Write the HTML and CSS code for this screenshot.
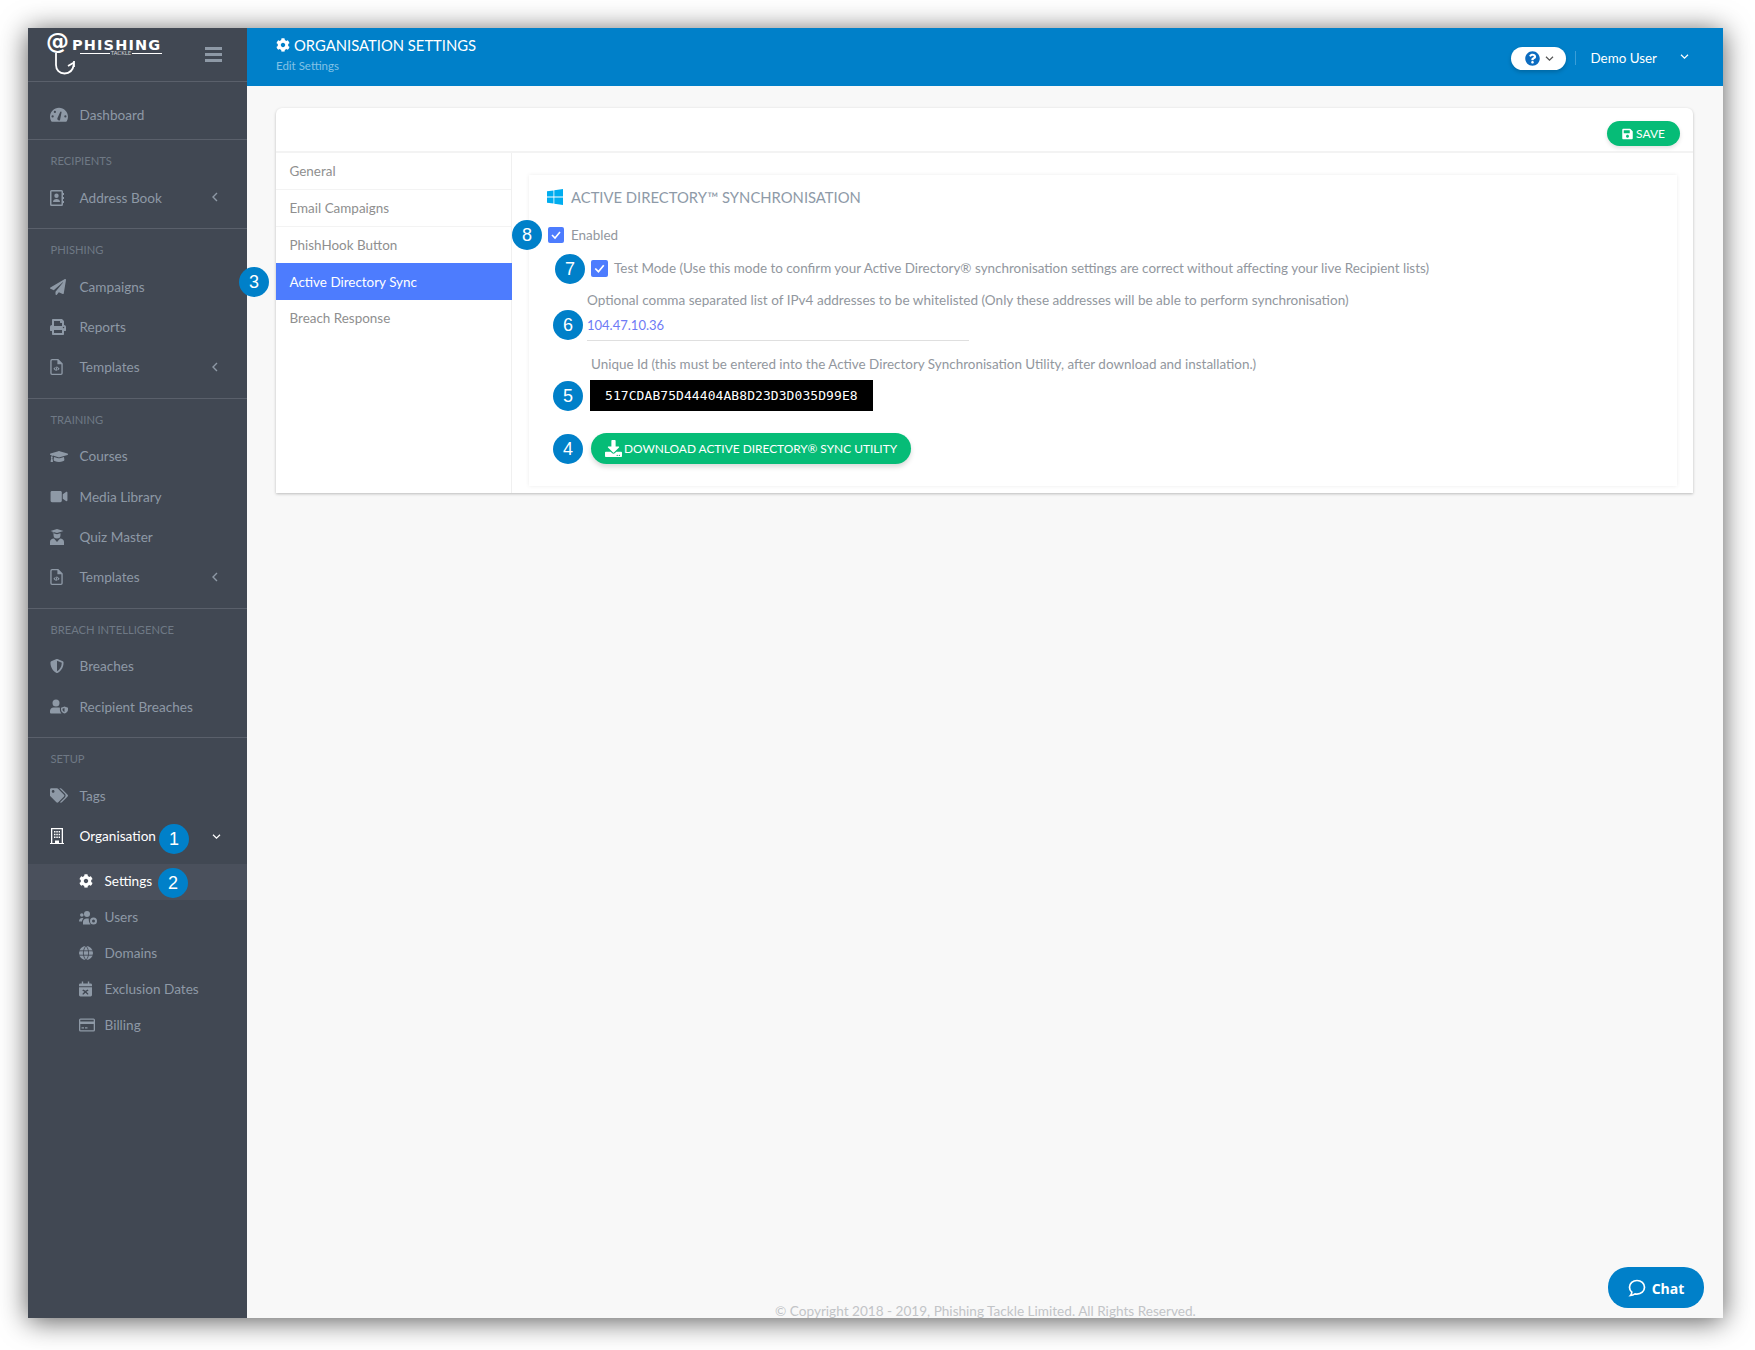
FILE: index.html
```html
<!DOCTYPE html>
<html lang="en">
  <head>
    <meta charset="utf-8">
    <meta name="viewport" content="width=device-width, initial-scale=1.0">
    <title>Phishing Tackle - Organisation Settings</title>
    <link rel="stylesheet" href="styles.css">
  </head>
  <body>
    <!-- Icon sprites -->
    <svg class="sprites" xmlns="http://www.w3.org/2000/svg">
      <symbol id="i-cog" viewBox="0 0 512 512"><path d="M487.4 315.7l-42.6-24.6c4.3-23.2 4.3-47 0-70.2l42.6-24.6c4.9-2.8 7.1-8.6 5.5-14-11.1-35.6-30-67.8-54.7-94.6-3.8-4.1-10-5.1-14.8-2.3L380.8 110c-17.9-15.4-38.5-27.3-60.8-35.1V25.8c0-5.6-3.9-10.5-9.4-11.7-36.7-8.2-74.3-7.8-109.2 0-5.5 1.2-9.4 6.1-9.4 11.7V75c-22.2 7.9-42.8 19.8-60.8 35.1L88.7 85.5c-4.9-2.8-11-1.9-14.8 2.3-24.7 26.7-43.6 58.9-54.7 94.6-1.7 5.4.6 11.2 5.5 14L67.3 221c-4.3 23.2-4.3 47 0 70.2l-42.6 24.6c-4.9 2.8-7.1 8.6-5.5 14 11.1 35.6 30 67.8 54.7 94.6 3.8 4.1 10 5.1 14.8 2.3l42.6-24.6c17.9 15.4 38.5 27.3 60.8 35.1v49.2c0 5.6 3.9 10.5 9.4 11.7 36.7 8.2 74.3 7.8 109.2 0 5.5-1.2 9.4-6.1 9.4-11.7v-49.2c22.2-7.9 42.8-19.8 60.8-35.1l42.6 24.6c4.9 2.8 11 1.9 14.8-2.3 24.7-26.7 43.6-58.9 54.7-94.6 1.5-5.5-.7-11.3-5.6-14.1zM256 336c-44.1 0-80-35.9-80-80s35.9-80 80-80 80 35.9 80 80-35.9 80-80 80z"/></symbol>
      <symbol id="i-gauge" viewBox="0 0 24 20"><path fill-rule="evenodd" d="M12 1C5.4 1 0 6.4 0 13c0 2.200.6 4.200 1.600 6 .2.400.7.600 1.100.600h18.600c.4 0 .9-.2 1.100-.6 1-1.800 1.600-3.800 1.600-6C24 6.400 18.600 1 12 1zM3.500 14a1.500 1.500 0 1 1 0-3 1.500 1.500 0 0 1 0 3zm3-6a1.500 1.500 0 1 1 0-3 1.500 1.500 0 0 1 0 3zm6.800 9.500a2.200 2.200 0 0 1-3.300-2.800l3.600-8.200a1 1 0 0 1 1.800.6zM20.500 14a1.500 1.500 0 1 1 0-3 1.500 1.500 0 0 1 0 3z"/></symbol>
      <symbol id="i-book" viewBox="0 0 14 16"><path fill-rule="evenodd" d="M1.500 0h10A1.500 1.500 0 0 1 13 1.500v13a1.500 1.500 0 0 1-1.500 1.500h-10A1.500 1.500 0 0 1 0 14.500v-13A1.500 1.500 0 0 1 1.500 0zm0 1.400v13.200h10V1.400zM6.500 3.500a2.200 2.200 0 1 1 0 4.400 2.200 2.200 0 0 1 0-4.400zM3 12c0-2 1.500-3 3.500-3s3.500 1 3.500 3zM13 3h1v2h-1zm0 4h1v2h-1zm0 4h1v2h-1z"/></symbol>
      <symbol id="i-plane" viewBox="0 0 512 512"><path d="M476 3.200L12.500 270.600c-18.100 10.400-15.800 35.600 2.200 43.200L121 358.400l287.300-253.200c5.500-4.900 13.300 2.600 8.600 8.300L176 407v80.500c0 23.600 28.500 32.900 42.500 15.800L282 426l124.600 52.200c14.200 6 30.400-2.900 33-18.200l72-432C515 7.800 493.300-6.800 476 3.200z"/></symbol>
      <symbol id="i-print" viewBox="0 0 512 512"><path d="M448 192V77.250c0-8.490-3.370-16.620-9.370-22.630L393.370 9.370c-6-6-14.140-9.370-22.630-9.370H96C78.330 0 64 14.330 64 32v160c-35.350 0-64 28.650-64 64v112c0 8.840 7.160 16 16 16h48v96c0 17.670 14.330 32 32 32h320c17.670 0 32-14.330 32-32v-96h48c8.840 0 16-7.160 16-16V256c0-35.350-28.650-64-64-64zm-64 256H128v-96h256v96zm0-224H128V64h192v48c0 8.840 7.160 16 16 16h48v96zm48 72c-13.250 0-24-10.750-24-24 0-13.260 10.750-24 24-24s24 10.740 24 24c0 13.250-10.750 24-24 24z"/></symbol>
      <symbol id="i-file" viewBox="0 0 14 18"><path fill-rule="evenodd" d="M2 0h7l5 5v11a2 2 0 0 1-2 2H2a2 2 0 0 1-2-2V2a2 2 0 0 1 2-2zm0 1.500a.5.500 0 0 0-.5.500v14a.5.500 0 0 0 .5.500h10a.5.500 0 0 0 .5-.5V6H8V1.500zM5.500 9L3.500 11l2 2 .8-.8L5 11l1.300-1.200zm3 0l-.8.800L9 11l-1.300 1.200.8.800 2-2zM6.900 8.500l-.9 5h1.100l.9-5z"/></symbol>
      <symbol id="i-cap" viewBox="0 0 640 512"><path d="M622.340 153.200L343.400 67.500c-15.200-4.670-31.600-4.670-46.790 0L17.660 153.200c-23.540 7.230-23.540 38.360 0 45.590l48.630 14.940c-10.670 13.190-17.230 29.280-17.880 46.900C38.780 266.150 32 276.110 32 288c0 10.780 5.680 19.850 13.860 25.650L20.330 428.530C18.110 438.520 25.710 448 35.940 448h56.110c10.240 0 17.840-9.480 15.620-19.470L82.140 313.650C90.320 307.850 96 298.780 96 288c0-11.570-6.470-21.250-15.660-26.870.76-15.020 8.440-28.300 20.690-36.720L296.600 284.500c9.060 2.780 26.440 6.250 46.790 0l278.950-85.700c23.550-7.240 23.550-38.360 0-45.600zM352.790 315.090c-28.530 8.760-52.840 3.920-65.590 0l-145.020-44.550L128 384c0 35.350 85.960 64 192 64s192-28.650 192-64l-14.180-113.470-145.030 44.560z"/></symbol>
      <symbol id="i-video" viewBox="0 0 576 512"><path d="M336.200 64H47.800C21.400 64 0 85.400 0 111.800v288.400C0 426.600 21.400 448 47.800 448h288.400c26.400 0 47.800-21.400 47.800-47.800V111.800c0-26.400-21.400-47.800-47.800-47.800zm189.400 37.700L416 177.300v157.400l109.600 75.500c21.200 14.600 50.400-.3 50.400-25.800V127.500c0-25.400-29.100-40.400-50.400-25.800z"/></symbol>
      <symbol id="i-grad" viewBox="0 0 14 16"><path d="M7 0l6.500 2L7 4 3.400 2.900v1.300h-.6V2.700L.5 2zM3.500 4.200L7 5.300l3.500-1.100V6a3.500 3.500 0 0 1-7 0zM4 9.500L7 13l3-3.500c2.300 0 4 1.500 4 3.500v3H0v-3c0-2 1.700-3.500 4-3.500z"/></symbol>
      <symbol id="i-shield" viewBox="0 0 512 512"><path d="M466.500 83.700l-192-80a48.150 48.150 0 0 0-36.900 0l-192 80C27.700 91.100 16 108.600 16 128c0 198.500 114.500 335.700 221.500 380.300 11.800 4.900 25.100 4.900 36.900 0C360.100 472.600 496 349.300 496 128c0-19.400-11.700-36.900-29.500-44.300zM256.100 446.300l-.1-381 175.900 73.300c-3.300 151.400-82.100 261.100-175.800 307.700z"/></symbol>
      <symbol id="i-usershield" viewBox="0 0 18 14"><circle cx="6" cy="3.500" r="3.500"/><path d="M3.500 8h5c.5 0 1 .1 1.400.2V10c0 1.600.6 3 1.600 4H1a1 1 0 0 1-1-1v-1.500C0 9.600 1.600 8 3.500 8z"/><path fill-rule="evenodd" d="M14.500 7l3.500 1.300V10c0 2-1.500 3.500-3.500 4-2-.5-3.500-2-3.500-4V8.300zm0 1.500l-2 .8V10c0 1.200.8 2 2 2.400z"/></symbol>
      <symbol id="i-tags" viewBox="0 0 640 512"><path d="M497.941 225.941L286.059 14.059A48 48 0 0 0 252.118 0H48C21.490 0 0 21.490 0 48v204.118a48 48 0 0 0 14.059 33.941l211.882 211.882c18.744 18.745 49.136 18.746 67.882 0l204.118-204.118c18.745-18.745 18.745-49.137 0-67.882zM112 160c-26.510 0-48-21.490-48-48s21.490-48 48-48 48 21.490 48 48-21.490 48-48 48zm513.941 133.823L421.823 497.941c-18.745 18.745-49.137 18.745-67.882 0l-.36-.36L527.640 323.522c16.999-16.999 26.360-39.600 26.360-63.640s-9.362-46.641-26.360-63.640L331.397 0h48.721a48 48 0 0 1 33.941 14.059l211.882 211.882c18.745 18.745 18.745 49.137 0 67.882z"/></symbol>
      <symbol id="i-building" viewBox="0 0 14 16"><path fill-rule="evenodd" d="M1 0h12v15h1v1H0v-1h1zm1.300 1.300V15H5v-2.500h4V15h2.700V1.300zM4 3h1.500v1.500H4zm2.300 0h1.500v1.500H6.300zm2.300 0H10v1.500H8.600zM4 5.800h1.500v1.500H4zm2.300 0h1.500v1.500H6.300zm2.300 0H10v1.500H8.600zM4 8.600h1.500v1.500H4zm2.300 0h1.500v1.500H6.300zm2.300 0H10v1.500H8.600z"/></symbol>
      <symbol id="i-usercog" viewBox="0 0 18 14"><circle cx="8" cy="3.500" r="3"/><circle cx="2.800" cy="4.500" r="1.800"/><path d="M0 11c0-2 1.200-3.500 3-3.500.5 0 1 .1 1.400.4C3.500 8.800 3 9.900 3 11zM4 14v-2.500C4 9.500 5.500 8 7.500 8h2.300c-.2 1.800.2 4 1.700 6z"/><circle cx="14.500" cy="10.500" r="2.500" fill="none" stroke="currentColor" stroke-width="2"/></symbol>
      <symbol id="i-globe" viewBox="0 0 16 16"><circle cx="8" cy="8" r="8"/><path d="M0 5.500h16M0 10.500h16M8 0c-4 4-4 12 0 16M8 0c4 4 4 12 0 16" fill="none" stroke="#414853" stroke-width="1"/></symbol>
      <symbol id="i-calendar" viewBox="0 0 14 16"><path fill-rule="evenodd" d="M3 0h1.500v2h5V0H11v2h1.500A1.500 1.500 0 0 1 14 3.500V5H0V3.500A1.500 1.500 0 0 1 1.500 2H3zM0 6h14v8.500a1.500 1.500 0 0 1-1.500 1.500h-11A1.500 1.500 0 0 1 0 14.500zm4.500 2.500l-1 1L5.800 11l-2.300 2.300 1 1L7 12l2.300 2.300 1-1L8 11l2.300-1.500-1-1L7 10z"/></symbol>
      <symbol id="i-card" viewBox="0 0 16 13"><path fill-rule="evenodd" d="M1.500 0h13A1.500 1.500 0 0 1 16 1.500v10a1.500 1.500 0 0 1-1.500 1.500h-13A1.500 1.500 0 0 1 0 11.500v-10A1.500 1.500 0 0 1 1.500 0zm-.2 1.300v1.700h13.400V1.300zm0 4.200v6.200h13.400V5.500zM2.500 8.800H5V10H2.500zm3.500 0h2.500V10H6z"/></symbol>
      <symbol id="i-question" viewBox="0 0 512 512"><path d="M504 256c0 136.997-111.043 248-248 248S8 392.997 8 256C8 119.083 119.043 8 256 8s248 111.083 248 248zM262.655 90c-54.497 0-89.255 22.957-116.549 63.758-3.536 5.286-2.353 12.415 2.715 16.258l34.699 26.310c5.205 3.947 12.621 3.008 16.665-2.122 17.864-22.658 30.113-35.797 57.303-35.797 20.429 0 45.698 13.148 45.698 32.958 0 14.976-12.363 22.667-32.534 33.976C247.128 238.528 216 254.941 216 296v4c0 6.627 5.373 12 12 12h56c6.627 0 12-5.373 12-12v-1.333c0-28.462 83.186-29.647 83.186-106.667 0-58.002-60.165-102-116.531-102zM256 338c-25.365 0-46 20.635-46 46 0 25.364 20.635 46 46 46s46-20.636 46-46c0-25.365-20.635-46-46-46z"/></symbol>
      <symbol id="i-save" viewBox="0 0 448 512"><path d="M433.941 129.941l-83.882-83.882A48 48 0 0 0 316.118 32H48C21.490 32 0 53.490 0 80v352c0 26.510 21.490 48 48 48h352c26.510 0 48-21.490 48-48V163.882a48 48 0 0 0-14.059-33.941zM224 416c-35.346 0-64-28.654-64-64 0-35.346 28.654-64 64-64s64 28.654 64 64c0 35.346-28.654 64-64 64zm96-304.520V212c0 6.627-5.373 12-12 12H76c-6.627 0-12-5.373-12-12V108c0-6.627 5.373-12 12-12h228.520c3.183 0 6.235 1.264 8.485 3.515l3.480 3.480A11.996 11.996 0 0 1 320 111.480z"/></symbol>
      <symbol id="i-download" viewBox="0 0 512 512"><path d="M216 0h80c13.300 0 24 10.700 24 24v168h87.700c17.800 0 26.700 21.500 14.100 34.100L269.700 378.300c-7.500 7.500-19.800 7.500-27.300 0L90.100 226.100c-12.600-12.600-3.700-34.100 14.100-34.100H192V24c0-13.300 10.700-24 24-24zm296 376v112c0 13.300-10.700 24-24 24H24c-13.300 0-24-10.700-24-24V376c0-13.300 10.700-24 24-24h146.700l49 49c20.100 20.100 52.500 20.100 72.600 0l49-49H488c13.300 0 24 10.700 24 24zm-124 88c0-11-9-20-20-20s-20 9-20 20 9 20 20 20 20-9 20-20zm64 0c0-11-9-20-20-20s-20 9-20 20 9 20 20 20 20-9 20-20z"/></symbol>
      <symbol id="i-left" viewBox="0 0 8 10"><path d="M6 1L2 5l4 4" fill="none" stroke="currentColor" stroke-width="1.400"/></symbol>
      <symbol id="i-down" viewBox="0 0 10 8"><path d="M1 2l4 4 4-4" fill="none" stroke="currentColor" stroke-width="1.400"/></symbol>
    </svg>

    <div class="app">

      <!-- Menu lateral -->
      <aside class="sidebar">
        <div class="brand">
          <div class="logo">
            <span class="logo-at">@</span>
            <svg class="logo-hook" viewBox="0 0 24 24"><path d="M3 0V12C3 17 6.500 20.500 11.500 20.500S20 17 21 11M21 8V14M21 9.500L15 13" fill="none" stroke="#fff" stroke-width="1.800"/></svg>
            <span class="logo-name">PHISHING</span>
            <span class="logo-sub">TACKLE</span>
          </div>
          <div class="burger"><span></span><span></span><span></span></div>
        </div>

        <nav class="menu-group first">
          <a class="menu-item"><span class="menu-icon"><svg class="w18"><use href="#i-gauge"/></svg></span>Dashboard</a>
        </nav>

        <nav class="menu-group">
          <h6>RECIPIENTS</h6>
          <a class="menu-item"><span class="menu-icon"><svg class="w14"><use href="#i-book"/></svg></span>Address Book<svg class="arrow"><use href="#i-left"/></svg></a>
        </nav>

        <nav class="menu-group">
          <h6>PHISHING</h6>
          <a class="menu-item"><span class="menu-icon"><svg class="w16"><use href="#i-plane"/></svg></span>Campaigns</a>
          <a class="menu-item"><span class="menu-icon"><svg class="w16"><use href="#i-print"/></svg></span>Reports</a>
          <a class="menu-item"><span class="menu-icon"><svg class="w13"><use href="#i-file"/></svg></span>Templates<svg class="arrow"><use href="#i-left"/></svg></a>
        </nav>

        <nav class="menu-group">
          <h6>TRAINING</h6>
          <a class="menu-item"><span class="menu-icon"><svg class="w18"><use href="#i-cap"/></svg></span>Courses</a>
          <a class="menu-item"><span class="menu-icon"><svg class="w18"><use href="#i-video"/></svg></span>Media Library</a>
          <a class="menu-item"><span class="menu-icon"><svg class="w14"><use href="#i-grad"/></svg></span>Quiz Master</a>
          <a class="menu-item"><span class="menu-icon"><svg class="w13"><use href="#i-file"/></svg></span>Templates<svg class="arrow"><use href="#i-left"/></svg></a>
        </nav>

        <nav class="menu-group">
          <h6>BREACH INTELLIGENCE</h6>
          <a class="menu-item"><span class="menu-icon"><svg class="w14"><use href="#i-shield"/></svg></span>Breaches</a>
          <a class="menu-item"><span class="menu-icon"><svg class="w18"><use href="#i-usershield"/></svg></span>Recipient Breaches</a>
        </nav>

        <nav class="menu-group last">
          <h6>SETUP</h6>
          <a class="menu-item"><span class="menu-icon"><svg class="w18"><use href="#i-tags"/></svg></span>Tags</a>
          <a class="menu-item open"><span class="menu-icon"><svg class="w14"><use href="#i-building"/></svg></span>Organisation<span class="badge badge-org">1</span><svg class="arrow down"><use href="#i-down"/></svg></a>
          <div class="submenu">
            <a class="sub-item current"><span class="sub-icon"><svg class="w14"><use href="#i-cog"/></svg></span>Settings<span class="badge badge-settings">2</span></a>
            <a class="sub-item"><span class="sub-icon"><svg class="w18"><use href="#i-usercog"/></svg></span>Users</a>
            <a class="sub-item"><span class="sub-icon"><svg class="w14"><use href="#i-globe"/></svg></span>Domains</a>
            <a class="sub-item"><span class="sub-icon"><svg class="w13"><use href="#i-calendar"/></svg></span>Exclusion Dates</a>
            <a class="sub-item"><span class="sub-icon"><svg class="w16"><use href="#i-card"/></svg></span>Billing</a>
          </div>
        </nav>
      </aside>

      <!-- Contenido -->
      <div class="main">
        <header class="topbar">
          <div class="page-title">
            <h1><svg class="title-cog"><use href="#i-cog"/></svg>ORGANISATION SETTINGS</h1>
            <p>Edit Settings</p>
          </div>
          <div class="top-right">
            <div class="help-pill"><svg class="help-icon"><use href="#i-question"/></svg><svg class="help-arrow"><use href="#i-down"/></svg></div>
            <span class="top-sep"></span>
            <span class="top-user">Demo User</span>
            <svg class="user-arrow"><use href="#i-down"/></svg>
          </div>
        </header>

        <div class="content">
          <section class="card">
            <div class="card-top">
              <button class="btn-save"><svg><use href="#i-save"/></svg>SAVE</button>
            </div>
            <div class="card-body">
              <ul class="tabs">
                <li>General</li>
                <li>Email Campaigns</li>
                <li>PhishHook Button</li>
                <li class="active">Active Directory Sync<span class="badge badge-tab">3</span></li>
                <li>Breach Response</li>
              </ul>

              <div class="panel-wrap">
                <div class="panel">
                  <h2 class="panel-title">
                    <svg class="win" viewBox="0 0 16 16"><path d="M0 2.300l6.500-.9v6.200H0zM7.300 1.300L16 0v7.600H7.300zM0 8.400h6.500v6.200L0 13.700zM7.300 8.400H16V16l-8.700-1.300z"/></svg>
                    ACTIVE DIRECTORY™ SYNCHRONISATION
                  </h2>

                  <div class="row row-enabled">
                    <span class="badge badge-8">8</span>
                    <span class="check"><svg viewBox="0 0 16 16"><path d="M4 8l3 3 5-6" fill="none" stroke="#fff" stroke-width="1.600"/></svg></span>
                    <span>Enabled</span>
                  </div>

                  <div class="row row-test">
                    <span class="badge badge-7">7</span>
                    <span class="check"><svg viewBox="0 0 16 16"><path d="M4 8l3 3 5-6" fill="none" stroke="#fff" stroke-width="1.600"/></svg></span>
                    <span>Test Mode (Use this mode to confirm your Active Directory® synchronisation settings are correct without affecting your live Recipient lists)</span>
                  </div>

                  <div class="row row-optional">Optional comma separated list of IPv4 addresses to be whitelisted (Only these addresses will be able to perform synchronisation)</div>

                  <div class="ip-field">
                    <span class="badge badge-6">6</span>
                    104.47.10.36
                  </div>

                  <div class="row row-unique">Unique Id (this must be entered into the Active Directory Synchronisation Utility, after download and installation.)</div>

                  <div class="unique-id">
                    <span class="badge badge-5">5</span>
                    517CDAB75D44404AB8D23D3D035D99E8
                  </div>

                  <button class="btn-download">
                    <span class="badge badge-4">4</span>
                    <svg><use href="#i-download"/></svg>DOWNLOAD ACTIVE DIRECTORY® SYNC UTILITY
                  </button>
                </div>
              </div>
            </div>
          </section>
        </div>

        <footer class="copyright">© Copyright 2018 - 2019, Phishing Tackle Limited. All Rights Reserved.</footer>

        <div class="chat">
          <svg viewBox="0 0 18 18"><path d="M9 1.500c-4.100 0-7.500 2.900-7.500 6.800 0 2 .9 3.700 2.300 4.900-.1 1.300-.6 2.500-1.300 3.300 1.800-.2 3.300-.8 4.500-1.600.6.100 1.300.2 2 .2 4.100 0 7.500-2.900 7.500-6.800S13.100 1.500 9 1.500z" fill="none" stroke="#fff" stroke-width="1.700"/></svg>
          Chat
        </div>
      </div>
    </div>
  </body>
</html>
```

FILE: styles.css
```css
/* Reseteo */
* {
  margin: 0;
  padding: 0;
  box-sizing: border-box;
}

body {
  font-family: "Lato", "Open Sans", sans-serif;
  font-size: 13.45px;
  background: #fff;
  color: #92979e;
  overflow: hidden;
}

.sprites {
  display: none;
}

svg {
  fill: currentColor;
}

.app {
  display: flex;
  width: 1695px;
  height: 1290px;
  margin: 28px 32px 32px 28px;
  box-shadow: 0 3px 26px rgba(0, 0, 0, 0.65);
  overflow: hidden;
}

/* Menu lateral */
.sidebar {
  width: 219px;
  flex-shrink: 0;
  background: #414853;
  color: #8e99a6;
  font-size: 13.6px;
}

.brand {
  display: flex;
  align-items: flex-start;
  justify-content: space-between;
  height: 54px;
  padding: 6px 25px 0 19px;
  border-bottom: 1px solid #5a606b;
}

.logo {
  position: relative;
  width: 116px;
  height: 46px;
  color: #fff;
}

.logo-at {
  position: absolute;
  left: -1px;
  top: -6px;
  font-family: "DejaVu Sans", sans-serif;
  font-size: 23px;
  font-weight: bold;
}

.logo-hook {
  position: absolute;
  left: 6px;
  top: 19px;
  width: 24px;
  height: 24px;
}

.logo-name {
  position: absolute;
  left: 25px;
  top: 5px;
  font-family: "DejaVu Sans", sans-serif;
  font-size: 14.5px;
  line-height: 12px;
  font-weight: bold;
  letter-spacing: 1.15px;
}

.logo-sub {
  position: absolute;
  left: 33px;
  top: 16px;
  display: flex;
  align-items: center;
  gap: 1px;
  width: 82px;
  font-family: "DejaVu Sans", sans-serif;
  font-size: 5.5px;
  line-height: 7px;
  color: #cfd2d6;
}

.logo-sub::before,
.logo-sub::after {
  content: "";
  flex: 1;
  height: 1px;
  background: #fff;
}

.burger {
  width: 17px;
  margin-top: 13px;
}

.burger span {
  display: block;
  height: 3px;
  margin-bottom: 3px;
  background: #8e99a6;
}

.menu-group {
  padding: 11px 0 9.5px;
  border-bottom: 1px solid #5a606b;
}

.menu-group.first {
  padding: 13px 0 4px;
}

.menu-group.last {
  border-bottom: none;
}

.menu-group h6 {
  height: 20px;
  padding-left: 22.5px;
  margin-bottom: 7px;
  font-size: 11.2px;
  line-height: 19px;
  font-weight: normal;
  color: #6f7985;
}

.menu-item {
  position: relative;
  display: flex;
  align-items: center;
  height: 40.4px;
  padding: 0 0 1px 22px;
}

.menu-group.first .menu-item {
  height: 40px;
}

.menu-item.open {
  color: #fff;
}

.menu-icon,
.sub-icon {
  display: flex;
  align-items: center;
  flex-shrink: 0;
}

.menu-icon {
  width: 29.5px;
}

.w13 { width: 13px; height: 16px; }
.w14 { width: 14px; height: 16px; }
.w16 { width: 16px; height: 16px; }
.w18 { width: 18px; height: 15px; }

.arrow {
  position: absolute;
  left: 183px;
  top: 14px;
  width: 8px;
  height: 10px;
}

.arrow.down {
  left: 184px;
  width: 9px;
  height: 7px;
  top: 17px;
}

.submenu {
  margin-top: 7px;
}

.sub-item {
  position: relative;
  display: flex;
  align-items: center;
  height: 36px;
  padding: 0 0 1px 51px;
}

.sub-item.current {
  background: #4a505c;
  color: #fff;
}

.sub-icon {
  width: 25.5px;
}

/* Circulos numerados */
.badge {
  position: absolute;
  top: 50%;
  width: 30px;
  height: 30px;
  margin-top: -15px;
  border-radius: 50%;
  background: #0080c9;
  color: #fff;
  font-family: "Liberation Sans", sans-serif;
  font-size: 18px;
  font-weight: normal;
  line-height: 30px;
  text-align: center;
}

.badge-org { left: 131px; margin-top: -12px; }
.badge-settings { left: 130px; margin-top: -14px; }
.badge-tab { left: -37px; }
.badge-8 { left: -35px; }
.badge-7 { left: -36px; margin-top: -14px; }
.badge-6 { left: -34px; margin-top: -16px; }
.badge-5 { left: -37px; }
.badge-4 { left: -38px; }

/* Contenido */
.main {
  position: relative;
  flex: 1;
  display: flex;
  flex-direction: column;
  min-width: 0;
  background: #f8f8f8;
}

.topbar {
  display: flex;
  align-items: flex-start;
  justify-content: space-between;
  height: 58px;
  padding: 6px 33px 0 29px;
  background: #0080c9;
  color: #fff;
}

.page-title h1 {
  display: flex;
  align-items: center;
  height: 22px;
  font-size: 14.8px;
  font-weight: normal;
}

.title-cog {
  width: 14px;
  height: 14px;
  margin-right: 4px;
}

.page-title p {
  margin-top: 3px;
  font-size: 11.5px;
  color: #82c2e6;
}

.top-right {
  display: flex;
  align-items: center;
  height: 24px;
  margin-top: 12px;
}

.help-pill {
  display: flex;
  align-items: center;
  justify-content: center;
  width: 55px;
  height: 23px;
  padding-left: 3px;
  border-radius: 12px;
  background: #fff;
  box-shadow: 0 2px 4px rgba(0, 0, 0, 0.2);
}

.help-icon {
  width: 15px;
  height: 15px;
  margin-right: 5px;
  color: #0c6cc0;
}

.help-arrow {
  width: 9px;
  height: 7px;
  color: #555;
}

.top-sep {
  width: 1px;
  height: 14px;
  margin: 0 15px 0 9px;
  background: #3a9ed8;
}

.top-user {
  font-size: 13.4px;
}

.user-arrow {
  width: 9px;
  height: 7px;
  margin-left: 23px;
  margin-bottom: 4px;
  margin-right: 1px;
}

.content {
  flex: 1;
  padding: 22px 30px 0 29px;
}

.card {
  border-radius: 6px 6px 0 0;
  background: #fff;
  box-shadow: 0 1px 3px rgba(0, 0, 0, 0.25);
}

.card-top {
  display: flex;
  align-items: flex-start;
  justify-content: flex-end;
  height: 45px;
  padding: 13px 13px 0 0;
  border-bottom: 2px solid #f3f3f3;
}

.btn-save {
  display: flex;
  align-items: center;
  justify-content: center;
  width: 73px;
  height: 25px;
  border: none;
  border-radius: 13px;
  background: #06bc77;
  color: #fff;
  font-family: inherit;
  font-size: 12px;
  box-shadow: 0 2px 4px rgba(0, 0, 0, 0.12);
}

.btn-save svg {
  width: 11px;
  height: 12px;
  margin-right: 3px;
}

.card-body {
  display: flex;
}

.tabs {
  width: 236px;
  flex-shrink: 0;
  list-style: none;
  border-right: 1px solid #f0f0f0;
}

.tabs li {
  position: relative;
  height: 37px;
  padding-left: 13.5px;
  line-height: 36px;
  border-bottom: 1px solid #f3f3f3;
  color: #8f8f8f;
}

.tabs li:last-child {
  border-bottom: none;
}

.tabs li.active {
  width: 236px;
  margin-top: -1px;
  line-height: 38px;
  background: #4d7cfe;
  border-bottom: none;
  color: #fff;
}

.panel-wrap {
  flex: 1;
  padding: 22px 16px 7px 17px;
}

.panel {
  padding: 10px 0 22px 18px;
  background: #fff;
  box-shadow: 0 0 4px rgba(0, 0, 0, 0.08);
  height: 311px;
}

.panel-title {
  display: flex;
  align-items: center;
  height: 24px;
  padding-bottom: 1px;
  font-size: 14.8px;
  font-weight: normal;
  color: #8e9aa8;
}

.win {
  width: 16px;
  height: 16px;
  margin-right: 8px;
  fill: #00adef;
}

.row {
  position: relative;
  display: flex;
  align-items: center;
  height: 20px;
  white-space: nowrap;
}

.row-enabled {
  margin-top: 16px;
  padding-left: 1px;
}

.row-test {
  margin: 13px 0 0 44px;
}

.row-optional {
  margin: 12px 0 0 40px;
  font-size: 13.55px;
}

.row-unique {
  margin: 13px 0 0 44px;
}

.check {
  display: block;
  width: 16px;
  height: 16px;
  margin-right: 7px;
  border-radius: 2px;
  background: #4d7cfe;
}

.row-test .check {
  width: 17px;
  height: 17px;
  margin-right: 6px;
}

.check svg {
  display: block;
  width: 100%;
  height: 100%;
}

.ip-field {
  position: relative;
  width: 382px;
  height: 30px;
  margin: 1px 0 0 40px;
  font-size: 13px;
  line-height: 28px;
  color: #6e7bf5;
  border-bottom: 1px solid #dfdfdf;
}

.unique-id {
  position: relative;
  width: 283px;
  height: 31px;
  margin: 6px 0 0 43px;
  padding-left: 15px;
  background: #000;
  color: #fff;
  font-family: "DejaVu Sans Mono", monospace;
  font-size: 13px;
  line-height: 32px;
  letter-spacing: 0.07px;
}

.btn-download {
  position: relative;
  display: flex;
  align-items: center;
  width: 320px;
  height: 31px;
  margin: 22px 0 0 44px;
  padding-left: 14px;
  border: none;
  border-radius: 16px;
  background: #06bc77;
  color: #fff;
  font-family: inherit;
  font-size: 11.9px;
  box-shadow: 0 3px 5px rgba(0, 0, 0, 0.15);
}

.btn-download svg {
  width: 17px;
  height: 17px;
  margin-right: 2px;
}

.copyright {
  height: 14px;
  margin: auto 0 0 528px;
  font-size: 13.6px;
  line-height: 14px;
  white-space: nowrap;
  color: #c2c4c7;
}

.chat {
  position: absolute;
  right: 19px;
  bottom: 10px;
  display: flex;
  align-items: center;
  justify-content: center;
  width: 96px;
  height: 41px;
  padding-top: 1px;
  border-radius: 20px;
  background: #0080c9;
  color: #fff;
  font-family: "Open Sans", sans-serif;
  font-size: 14px;
  font-weight: bold;
}

.chat svg {
  width: 18px;
  height: 18px;
  margin-right: 6px;
}
```
